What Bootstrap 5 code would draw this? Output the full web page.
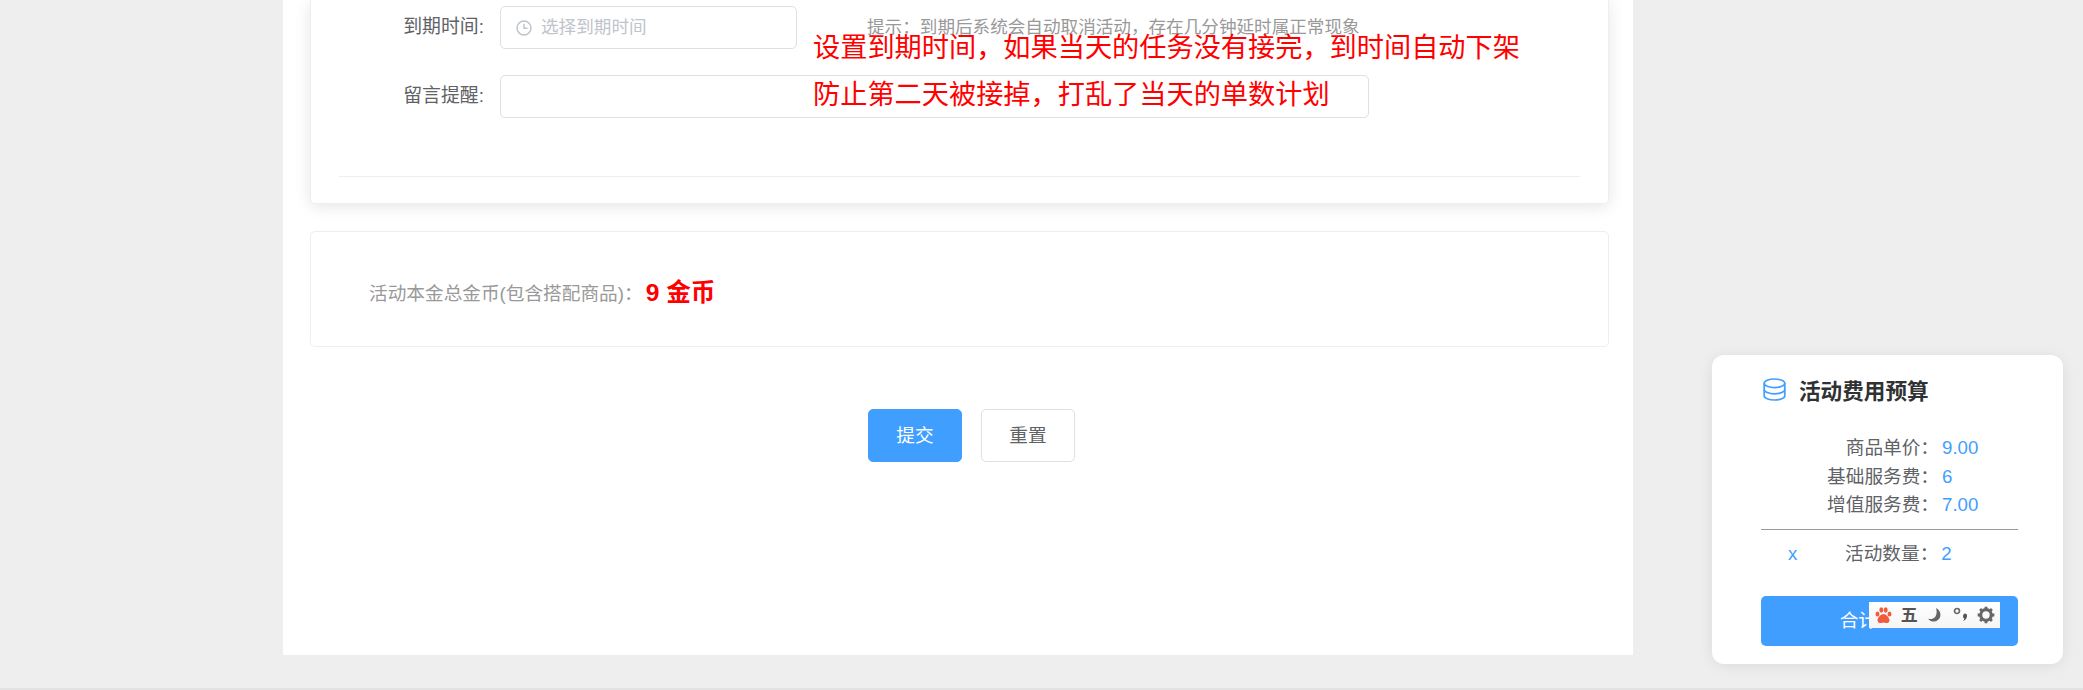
<!DOCTYPE html>
<html lang="zh-CN">
<head>
<meta charset="utf-8">
<title>活动费用预算</title>
<link rel="stylesheet" href="https://cdn.jsdelivr.net/npm/bootstrap@5.3.0/dist/css/bootstrap.min.css">
<style>
html,body{height:690px;overflow:hidden}
body{background:#eee;font-family:"Liberation Sans","Noto Sans CJK SC",sans-serif;color:#606266;font-size:18.67px;position:relative;border-bottom:2px solid #e2e2e2}
.shell{width:1350px;height:655px;margin-left:283px;background:#fff;padding:0 24px 0 27px}
.form-box{height:204px;border:1px solid #ebeef5;border-top:0;border-radius:0 0 5px 5px;box-shadow:0 3px 16px rgba(0,0,0,.1);padding:6px 28px 0 28px;background:#fff}
.f-row{display:flex;align-items:center;height:43px;margin-bottom:26px}
.f-label{width:145px;margin-right:16px;text-align:right;white-space:nowrap;line-height:1;font-size:18.9px}
.f-input{height:43px;border:1px solid #dcdfe6;border-radius:5px;background:#fff;box-shadow:none;padding:0;color:#606266;font-size:17.6px}
.f-date{width:297px;gap:9px;padding-left:15px;color:#c0c4cc}
.f-long{width:869px}
.f-hint{color:#999;font-size:17.6px;margin-left:70px;white-space:nowrap}
.f-rule{margin:0;height:1px;background:#ebeef5;opacity:1;border:0;position:relative;top:32px}
.sum-box{height:116px;margin-top:27px;border:1px solid #ebeef5;border-radius:5px;padding:9px 0 0 58px;background:#fff;box-shadow:none}
.sum-text{color:#999;font-size:18.67px}
.sum-val{color:#f00;font-weight:700;font-size:24.6px;margin-left:3px}
.act-row{margin-top:62px;padding-left:558px;gap:19px}
.act-btn{width:94px;height:53px;border-radius:5px;font-size:18.67px;padding:0;display:flex;align-items:center;justify-content:center}
.act-main{background:#409eff;border:1px solid #409eff;color:#fff}
.act-plain{background:#fff;border:1px solid #dcdfe6;color:#606266}
.note{position:absolute;left:813px;color:#f00;font-size:27.2px;line-height:1;white-space:nowrap}
.note-a{top:34px}
.note-b{top:81px}
.budget{position:absolute;left:1712px;top:355px;width:351px;height:309px;background:#fff;border-radius:12px;box-shadow:0 2px 14px rgba(0,0,0,.08);padding:23px 45px 0 49px}
.b-head{gap:13px;height:28px;color:#303133;font-weight:700;font-size:21.6px}
.b-icon{margin:-6px 0 0 2px}
.b-rows{margin-top:28.4px}
.b-line{display:grid;grid-template-columns:178px auto;column-gap:3px;height:28.4px;align-items:center;line-height:1}
.b-key{text-align:right;white-space:nowrap}
.b-num{color:#409eff;white-space:nowrap}
.b-div{margin:9.600px 0 10px;height:1px;border:0;background:#999;opacity:1}
.b-x{display:flex;align-items:center;height:28px;line-height:1}
.b-mark{color:#409eff;width:84px;padding-left:27px}
.b-x .b-num{margin-left:3px}
.b-total{margin-top:28px;width:257px;height:50px;border-radius:5px;background:#409eff;color:#fff;border:0;padding:0 0 0 3px;font-size:18.67px;display:flex;align-items:center;justify-content:center}
.ime{position:absolute;left:157px;top:247px;width:131px;height:26px;background:linear-gradient(#fff,#f5f5f5);display:flex;align-items:center;padding-left:2px}
.ime-cell{width:25.5px;display:flex;align-items:center;justify-content:center;color:#555;font-weight:700;font-size:17px;line-height:1}
</style>
</head>
<body>
<main class="shell">
  <section class="form-box">
    <div class="f-row">
      <label class="f-label">到期时间:</label>
      <div class="form-control f-input f-date d-flex align-items-center">
        <svg width="16" height="16" viewBox="0 0 16 16" fill="none" stroke="#c0c4cc" stroke-width="1.500"><circle cx="8" cy="8" r="7"/><path d="M8 4v4.300h3.600"/></svg>
        <span>选择到期时间</span>
      </div>
      <span class="f-hint">提示：到期后系统会自动取消活动，存在几分钟延时属正常现象</span>
    </div>
    <div class="f-row">
      <label class="f-label">留言提醒:</label>
      <div class="form-control f-input f-long"></div>
    </div>
    <hr class="f-rule">
  </section>
  <section class="card sum-box flex-row align-items-center">
    <span class="sum-text">活动本金总金币(包含搭配商品)：</span><span class="sum-val">9 金币</span>
  </section>
  <div class="d-flex act-row">
    <button type="button" class="btn act-btn act-main">提交</button>
    <button type="button" class="btn act-btn act-plain">重置</button>
  </div>
</main>

<div class="note note-a">设置到期时间，如果当天的任务没有接完，到时间自动下架</div>
<div class="note note-b">防止第二天被接掉，打乱了当天的单数计划</div>

<aside class="budget">
  <div class="d-flex align-items-center b-head">
    <svg class="b-icon" width="23" height="23" viewBox="0 0 23 23" fill="none" stroke="#409eff" stroke-width="1.700"><ellipse cx="11.500" cy="5.300" rx="10.300" ry="4.300"/><path d="M1.200 5.300v12.400c0 2.400 4.600 4.300 10.300 4.300s10.300-1.900 10.300-4.300V5.300"/><path d="M1.200 11.500c0 2.400 4.600 4.300 10.300 4.300s10.300-1.900 10.300-4.300"/></svg>
    <span>活动费用预算</span>
  </div>
  <div class="b-rows">
    <div class="b-line"><span class="b-key">商品单价：</span><span class="b-num">9.00</span></div>
    <div class="b-line"><span class="b-key">基础服务费：</span><span class="b-num">6</span></div>
    <div class="b-line"><span class="b-key">增值服务费：</span><span class="b-num">7.00</span></div>
  </div>
  <hr class="b-div">
  <div class="b-x"><span class="b-mark">x</span><span class="b-key">活动数量：</span><span class="b-num">2</span></div>
  <button type="button" class="btn b-total">合计：44.00</button>
  <div class="ime">
    <span class="ime-cell"><svg width="17" height="17" viewBox="0 0 17 17" fill="#f15b3c"><ellipse cx="2.500" cy="7" rx="2" ry="2.600"/><ellipse cx="6.300" cy="3" rx="2" ry="2.700"/><ellipse cx="10.700" cy="3" rx="2" ry="2.700"/><ellipse cx="14.500" cy="7" rx="2" ry="2.600"/><path d="M8.500 7C6 7 2.800 10.500 2.500 13c-.1 2.800 2.500 3.300 3.800 3 1-.1 1.500-.5 2.200-.5s1.300.4 2.300.5c1.200.3 3.800-.2 3.700-3C14.200 10.500 11 7 8.500 7z"/></svg></span>
    <span class="ime-cell">五</span>
    <span class="ime-cell"><svg width="16" height="16" viewBox="0 0 16 16" fill="#666"><path d="M9 1c3.300 1.800 5 4.800 4.300 8.200-.7 3.400-4 5.600-7.500 5.300C3.800 14.300 2 13.300 1.200 11.800c3.200.7 6-.3 7.400-2.600C10 6.800 9.900 3.500 9 1z"/></svg></span>
    <span class="ime-cell"><svg width="17" height="16" viewBox="0 0 17 16" fill="none"><circle cx="5" cy="4" r="2.500" stroke="#666" stroke-width="1.700"/><path d="M13 6.500c2.200-.1 2.800 3 1 5.500-.8 1.100-2 1.800-3 2.100.8-1 1.300-1.700 1.400-2.500-2.100-.6-1.600-5 .6-5.100z" fill="#555"/></svg></span>
    <span class="ime-cell"><svg width="18" height="18" viewBox="0 0 17 17" fill="none"><circle cx="8.500" cy="8.500" r="5" stroke="#666" stroke-width="3"/><path d="M8.500 .6v2.600M8.500 13.800v2.600M.6 8.500h2.600M13.800 8.500h2.600M2.900 2.900l1.900 1.900M12.200 12.200l1.900 1.900M14.100 2.900l-1.900 1.900M4.800 12.200l-1.900 1.900" stroke="#666" stroke-width="2.600"/></svg></span>
  </div>
</aside>
<script src="https://cdn.jsdelivr.net/npm/bootstrap@5.3.0/dist/js/bootstrap.bundle.min.js"></script>
</body>
</html>
